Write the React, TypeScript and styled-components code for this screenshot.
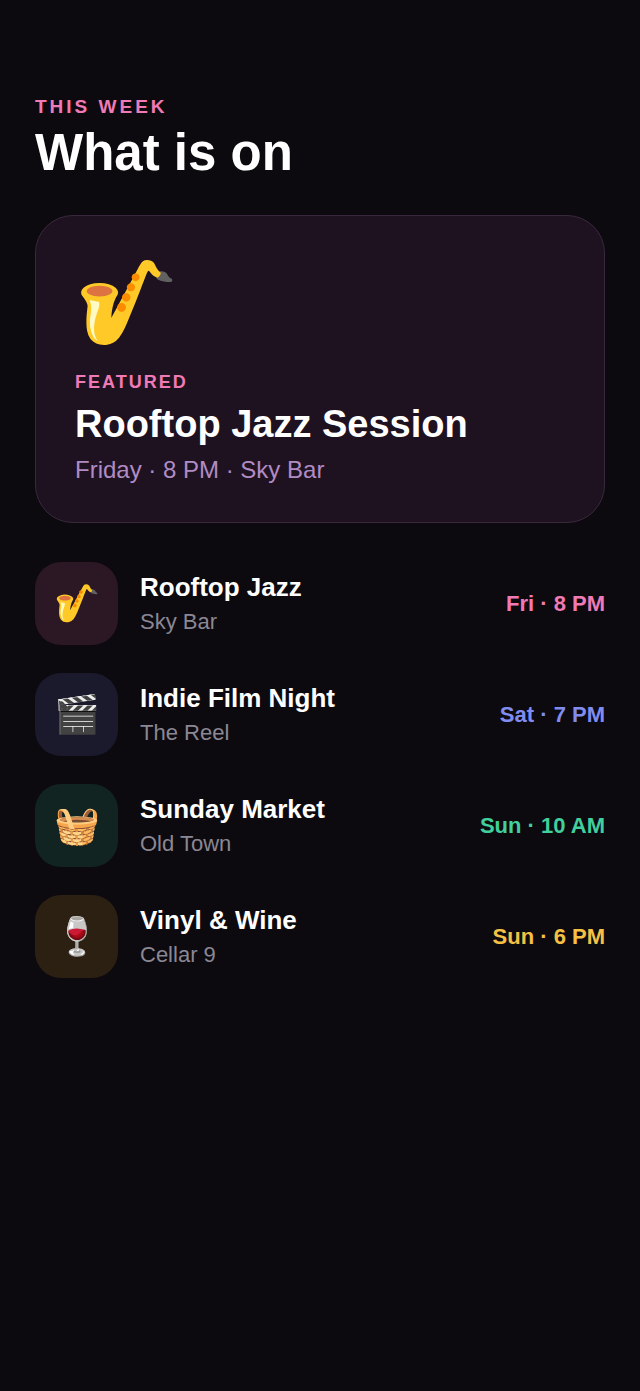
import styled, { createGlobalStyle } from 'styled-components'

type EventItem = {
  id: number
  emoji: string
  title: string
  place: string
  time: string
  color: string
  tint: string
}

const events: EventItem[] = [
  { id: 1, emoji: '🎷', title: 'Rooftop Jazz', place: 'Sky Bar', time: 'Fri · 8 PM', color: '#f07ab5', tint: '#2c1724' },
  { id: 2, emoji: '🎬', title: 'Indie Film Night', place: 'The Reel', time: 'Sat · 7 PM', color: '#818cf0', tint: '#1b1a2c' },
  { id: 3, emoji: '🧺', title: 'Sunday Market', place: 'Old Town', time: 'Sun · 10 AM', color: '#40cf9d', tint: '#122422' },
  { id: 4, emoji: '🍷', title: 'Vinyl & Wine', place: 'Cellar 9', time: 'Sun · 6 PM', color: '#f5c043', tint: '#2c2013' },
]

const App: React.FC = () => (
  <>
    <GlobalStyle />
    <Page>
      <header>
        <Overline>THIS WEEK</Overline>
        <Title>What is on</Title>
      </header>
      <Featured>
        <FeaturedEmoji>🎷</FeaturedEmoji>
        <Label>FEATURED</Label>
        <FeaturedTitle>Rooftop Jazz Session</FeaturedTitle>
        <FeaturedMeta>Friday · 8 PM · Sky Bar</FeaturedMeta>
      </Featured>
      <List>
        {events.map((event) => (
          <Row key={event.id}>
            <Tile $tint={event.tint}>{event.emoji}</Tile>
            <Info>
              <Name>{event.title}</Name>
              <Place>{event.place}</Place>
            </Info>
            <Time $color={event.color}>{event.time}</Time>
          </Row>
        ))}
      </List>
    </Page>
  </>
)

export default App

const GlobalStyle = createGlobalStyle`
  * {
    box-sizing: border-box;
  }

  body {
    margin: 0;
    background: #0c0a0f;
    color: #fff;
    font-family: 'Liberation Sans', Arial, sans-serif;
  }

  h1, h2, h3, p, ul {
    margin: 0;
    padding: 0;
  }
`

const Page = styled.main`
  min-height: 100vh;
  padding: 96px 35px 40px;
`

const Overline = styled.p`
  color: #f07ab5;
  font-size: 19px;
  line-height: 22px;
  font-weight: 700;
  letter-spacing: 3px;
`

const Title = styled.h1`
  margin-top: 5px;
  font-size: 51px;
  line-height: 60px;
  font-weight: 700;
`

const Featured = styled.section`
  margin-top: 32px;
  padding: 39px 39px 38px;
  border: 1px solid #3a293e;
  border-radius: 38px;
  background: #1e1221;
`

const FeaturedEmoji = styled.div`
  font-size: 83px;
  line-height: 96px;
`

const Label = styled(Overline)`
  margin-top: 21px;
  font-size: 18px;
  line-height: 20px;
  letter-spacing: 2px;
`

const FeaturedTitle = styled.h2`
  margin-top: 10px;
  font-size: 38px;
  line-height: 44px;
  font-weight: 700;
`

const FeaturedMeta = styled.p`
  margin-top: 10px;
  color: #b18bc4;
  font-size: 24px;
  line-height: 28px;
`

const List = styled.ul`
  display: flex;
  flex-direction: column;
  gap: 28px;
  margin-top: 39px;
  list-style: none;
`

const Row = styled.li`
  display: flex;
  align-items: center;
  gap: 22px;
`

const Tile = styled.div<{ $tint: string }>`
  display: flex;
  align-items: center;
  justify-content: center;
  flex-shrink: 0;
  width: 83px;
  height: 83px;
  border-radius: 26px;
  background: ${({ $tint }) => $tint};
  font-size: 37px;
`

const Info = styled.div`
  flex: 1;
  min-width: 0;
`

const Name = styled.h3`
  font-size: 26px;
  line-height: 30px;
  font-weight: 700;
`

const Place = styled.p`
  margin-top: 7px;
  color: #8b8794;
  font-size: 22px;
  line-height: 26px;
`

const Time = styled.span<{ $color: string }>`
  color: ${({ $color }) => $color};
  font-size: 22px;
  font-weight: 700;
  white-space: nowrap;
`
